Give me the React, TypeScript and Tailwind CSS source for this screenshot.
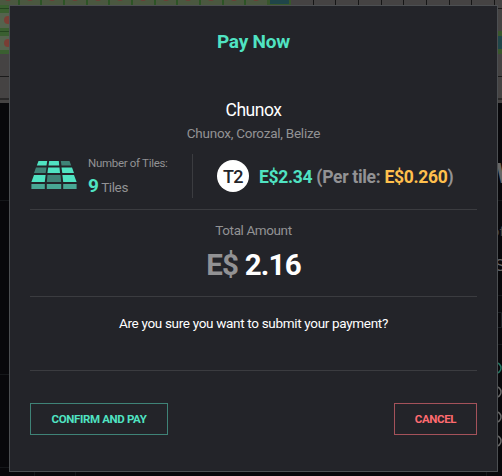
import React from 'react';

const columns = [19, 41, 64, 87, 109, 132, 155, 177, 200, 223, 245];
const emptyColumns = [313, 335, 358, 381, 403, 426, 449, 471, 494];

const MapBackdrop: React.FC = () => (
  <svg className="absolute inset-0" width="502" height="476" viewBox="0 0 502 476">
    <rect width="502" height="476" fill="#08080b" />
    <rect width="502" height="103" fill="#454343" />
    <rect width="268" height="5" fill="#4b5840" />
    {columns.map((x) => (
      <g key={x}>
        <rect x={x - 1} width="2" height="5" fill="#2d5426" />
        <ellipse cx={x + 11} cy="-1" rx="3" ry="2" fill="#6b3f36" />
      </g>
    ))}
    <ellipse cx="8" cy="-1" rx="3" ry="2" fill="#6b3f36" />
    <rect x="267" width="24" height="5" fill="#39572c" />
    <rect x="270" width="19" height="4" fill="#1f4549" />
    {emptyColumns.map((x) => (
      <rect key={x} x={x} width="1" height="5" fill="#161616" />
    ))}
    <rect y="5" width="10" height="49" fill="#3a5f30" />
    <rect y="8" width="10" height="1" fill="#24451f" />
    <rect y="31" width="10" height="1" fill="#24451f" />
    <rect y="13" width="10" height="15" fill="#55634e" />
    <rect y="36" width="10" height="14" fill="#55634e" />
    <circle cx="8" cy="20" r="4" fill="#793e35" />
    <circle cx="8" cy="43" r="4" fill="#793e35" />
    <rect x="497" y="31" width="5" height="23" fill="#39572c" />
    <rect x="497" y="36" width="5" height="13" fill="#1f4549" />
    <path d="M0 76.500h10M497 8.500h5M497 76.500h5" stroke="#1b1b1b" />
    <path d="M0 99h10M497 99h5" stroke="#292828" strokeWidth="2" />
    <path
      d="M0 200.500h10M0 374.500h10M0 467.500h10M34.500 472v4M75.500 472v4M486.500 472v4M497 200.500h5M497 295.500h5M497 344.500h5"
      stroke="#15171a"
    />
    <path d="M497 312.500h4.500v15H497" fill="none" stroke="#1b2024" />
    <circle cx="495.500" cy="368" r="5.500" fill="none" stroke="#237561" strokeWidth="1.500" />
    <circle cx="495.500" cy="392" r="5.500" fill="none" stroke="#666" strokeWidth="1.500" />
    <circle cx="495.500" cy="417" r="5.500" fill="none" stroke="#666" strokeWidth="1.500" />
    <circle cx="495.500" cy="441" r="5.500" fill="none" stroke="#666" strokeWidth="1.500" />
    <g fontFamily="Roboto, sans-serif" fill="#666">
      <text x="496" y="183" fontSize="28" fontWeight="700">W</text>
      <text x="492" y="236" fontSize="13" fill="#444">of</text>
      <text x="495" y="271" fontSize="17">S</text>
    </g>
  </svg>
);

const TilesIcon: React.FC = () => (
  <svg width="46" height="28" viewBox="0 0 46 28" className="mb-0.5 shrink-0">
    <g fill="#50e3c2">
      <path d="M7.500 0h8.700l-.7 4.500H5.800z" />
      <path d="M18.200 0h9.600l.4 4.500H17.500z" />
      <path d="M17.200 6.500h11.300l.5 5.500H16.400z" />
      <path d="M30.500 6.500h10.500l2 5.500H31.300z" />
      <path d="M3 14h11.600l-.8 7H.4z" />
      <path d="M31.400 14h11.600l2.600 7H32.200z" />
    </g>
    <g fill="#3f8377">
      <path d="M29.800 0h8.700l1.700 4.500h-9.700z" />
      <path d="M5 6.500h10.500l-.8 5.500H3z" />
      <path d="M16.500 14h13l.7 7H15.800z" />
    </g>
    <g fill="#48a794">
      <path d="M.4 23h13.400v5H.4z" />
      <path d="M15.800 23h14.400v5H15.800z" />
      <path d="M32.200 23h13.400v5H32.200z" />
    </g>
  </svg>
);

const App: React.FC = () => {
  return (
    <div className="relative h-[476px] w-[502px] overflow-hidden pl-[9px] pt-[5px] font-['Roboto','Liberation_Sans',sans-serif]">
      <MapBackdrop />
      <div className="relative flex h-[467px] w-[489px] flex-col border border-[#4c4f52] bg-[#232429] px-5">
        <h2 className="mt-[22px] h-7 text-center text-[19px] leading-7 font-bold tracking-[-0.2px] text-[#50e3c2]">
          Pay Now
        </h2>

        <div className="mt-10 text-center">
          <div className="h-6 text-[17.500px] leading-7 tracking-[-0.5px] text-white">Chunox</div>
          <div className="mt-[3px] h-5 text-[13.500px] leading-5 tracking-[-0.25px] text-[#929294]">
            Chunox, Corozal, Belize
          </div>
        </div>

        <div className="mt-[11px] flex h-11 items-center">
          <div className="flex h-11 w-[163px] shrink-0 items-center border-r border-[#3b3c40] pl-px">
            <TilesIcon />
            <div className="ml-[11px] whitespace-nowrap text-[#929294]">
              <div className="mt-0.5 text-[11.500px] leading-4 tracking-[-0.3px]">Number of Tiles:</div>
              <div className="mt-[3px] text-[13.500px] leading-6 tracking-[-0.4px]">
                <b className="text-[19px] text-[#50e3c2]">9</b> Tiles
              </div>
            </div>
          </div>
          <div className="ml-6 flex size-8 items-center justify-center rounded-full bg-white text-[18px] font-medium tracking-[-0.5px] text-[#232429]">
            T2
          </div>
          <div className="ml-[10px] pt-0.5 text-[17.500px] font-bold tracking-[-0.3px] whitespace-nowrap text-[#929294]">
            <span className="text-[#50e3c2]">E$2.34</span> (Per tile: <span className="text-[#ffc04d]">E$0.260</span>)
          </div>
        </div>

        <div className="mt-[11px] h-[88px] border-y border-[#3b3c40] text-center">
          <div className="mt-[10px] text-[13.500px] leading-5 tracking-[-0.4px] text-[#929294]">Total Amount</div>
          <div className="mt-[7px] text-[29.500px] leading-9 font-bold tracking-[-0.8px] text-white">
            <span className="text-[#929294]">E$</span> 2.16
          </div>
        </div>

        <div className="h-[74px] border-b border-[#3b3c40] pt-4 text-center text-[13.500px] leading-5 tracking-[-0.32px] text-white">
          Are you sure you want to submit your payment?
        </div>

        <div className="mt-8 flex justify-between text-[11.500px] font-bold tracking-[-0.35px]">
          <button className="h-8 w-[138px] border border-[#3f8377] pt-px text-[#50e3c2]">CONFIRM AND PAY</button>
          <button className="h-8 w-[83px] border border-[#a4525a] pt-px text-[#ff6b70]">CANCEL</button>
        </div>
      </div>
    </div>
  );
};

export default App;
